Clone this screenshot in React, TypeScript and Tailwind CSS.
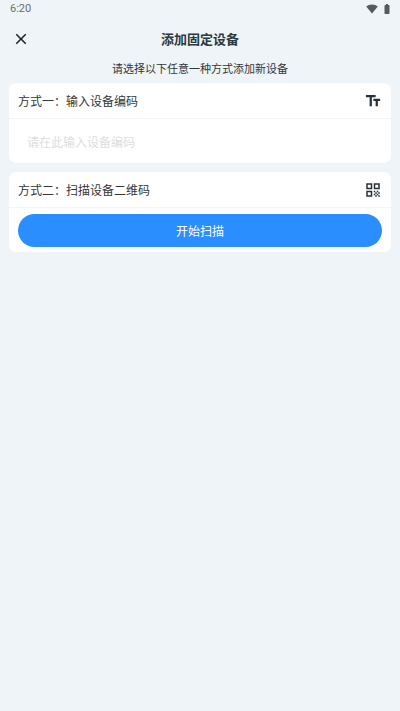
import type { ReactNode } from "react";
import { MdBatteryFull, MdClose, MdQrCode, MdTextFields } from "react-icons/md";

function StatusBar() {
  return (
    <div className="flex h-4 items-center justify-between pl-[10px] pr-2 text-[#6b6e70]">
      <span className="font-['Roboto',sans-serif] text-[11px] leading-4">6:20</span>
      <div className="flex items-center gap-1 text-[#58595b]">
        <svg viewBox="0 0 12 10" className="h-[10px] w-3" fill="currentColor" aria-hidden="true">
          <path d="M6 9.6 0.2 2.5C1.8 1.1 3.8 0.4 6 0.4s4.200.7 5.8 2.1z" />
        </svg>
        <MdBatteryFull className="-mx-px size-3" />
      </div>
    </div>
  );
}

type CardProps = {
  title: ReactNode;
  icon: ReactNode;
  children: ReactNode;
};

function MethodCard({ title, icon, children }: CardProps) {
  return (
    <section className="rounded-[7px] bg-white">
      <div className="flex h-9 items-center justify-between border-b border-[#f3f4f5] px-[9px] text-xs text-[#333638]">
        {title}
        <span className="text-[#263238]">{icon}</span>
      </div>
      {children}
    </section>
  );
}

export default function App() {
  return (
    <div className="min-h-screen bg-[#eef4f8] pt-px font-['Noto_Sans_CJK_SC',sans-serif]">
      <StatusBar />
      <header className="grid h-11 grid-cols-[41px_1fr_41px] items-center">
        <button type="button" aria-label="关闭" className="flex justify-center text-[#1c1f21]">
          <MdClose className="size-[18px]" />
        </button>
        <h1 className="text-center text-[13px] font-bold text-[#2b3940]">添加固定设备</h1>
      </header>
      <p className="pb-2 text-center text-[11px] leading-[14px] text-[#333638]">
        请选择以下任意一种方式添加新设备
      </p>

      <main className="flex flex-col gap-[9px] px-[9px]">
        <MethodCard
          title={<label htmlFor="device-code">方式一：输入设备编码</label>}
          icon={<MdTextFields className="size-[18px]" />}
        >
          <input
            id="device-code"
            type="text"
            placeholder="请在此输入设备编码"
            className="block h-11 w-full bg-transparent px-[18px] text-xs text-[#333638] outline-none placeholder:text-[#dcdddd]"
          />
        </MethodCard>

        <MethodCard
          title={<h2>方式二：扫描设备二维码</h2>}
          icon={<MdQrCode className="size-[18px]" />}
        >
          <div className="px-[9px] pb-[5px] pt-[6px]">
            <button type="button" className="block h-[33px] w-full rounded-full bg-[#2b8eff] text-xs text-white">
              开始扫描
            </button>
          </div>
        </MethodCard>
      </main>
    </div>
  );
}
